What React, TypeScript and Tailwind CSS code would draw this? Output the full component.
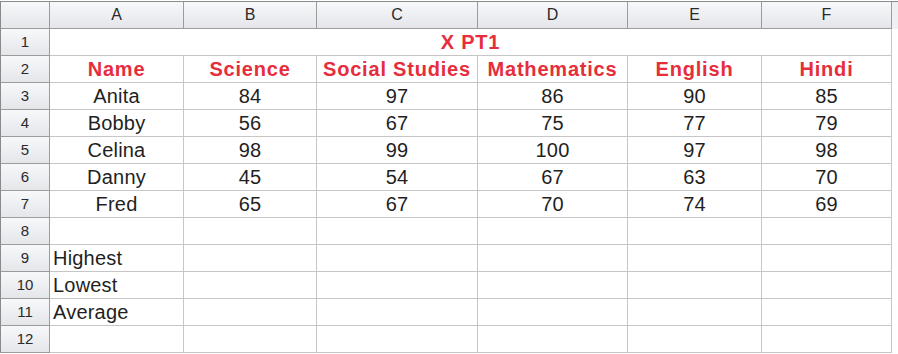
const COLS = ['A', 'B', 'C', 'D', 'E', 'F'];

const SUBJECTS = ['Name', 'Science', 'Social Studies', 'Mathematics', 'English', 'Hindi'];

const MARKS: [string, number[]][] = [
  ['Anita', [84, 97, 86, 90, 85]],
  ['Bobby', [56, 67, 75, 77, 79]],
  ['Celina', [98, 99, 100, 97, 98]],
  ['Danny', [45, 54, 67, 63, 70]],
  ['Fred', [65, 67, 70, 74, 69]],
];

const SUMMARY = ['', 'Highest', 'Lowest', 'Average', ''];

const head =
  'flex items-center justify-center bg-gradient-to-b from-[#f7f8fa] to-[#e4e6ea] border-r border-b border-[#9c9c9c] text-[#2a2a2a]';
const cell = 'flex items-center border-r border-b border-[#c6c6c6] h-[27px]';
const red = 'justify-center text-[20px] font-bold tracking-[0.8px] text-[#e62d3c] whitespace-nowrap';

function RowHead({ n }: { n: number }) {
  return <div className={`${head} h-[27px] text-[15px] border-l border-l-[#8a8a8a]`}>{n}</div>;
}

export default function App() {
  return (
    <div
      className="w-[898px] h-[354px] overflow-hidden bg-white pt-px"
      style={{ fontFamily: '"Liberation Sans", Arial, sans-serif' }}
    >
      <div className="grid grid-cols-[50px_134px_133px_161px_150px_134px_130px_6px]">
        {/* column letters */}
        <div className={`${head} h-[28px] border-t border-t-[#8a8a8a] border-l border-l-[#8a8a8a]`} />
        {COLS.map((c) => (
          <div key={c} className={`${head} h-[28px] text-[16px] border-t border-t-[#8a8a8a]`}>
            {c}
          </div>
        ))}
        <div className="h-[28px] border-t border-[#8a8a8a] bg-[#eef0f2]" />

        {/* row 1: merged title */}
        <RowHead n={1} />
        <div className={`${cell} ${red} col-span-6`}>X PT1</div>
        <div />

        {/* row 2: subjects */}
        <RowHead n={2} />
        {SUBJECTS.map((s) => (
          <div key={s} className={`${cell} ${red}`}>
            {s}
          </div>
        ))}
        <div />

        {/* rows 3-7: marks */}
        {MARKS.map(([name, scores], i) => (
          <div key={name} className="contents">
            <RowHead n={i + 3} />
            <div className={`${cell} justify-center text-[20px] tracking-[0.2px] text-[#1f1f1f]`}>{name}</div>
            {scores.map((m, j) => (
              <div key={j} className={`${cell} justify-center text-[20px] tracking-[0.2px] text-[#1f1f1f]`}>
                {m}
              </div>
            ))}
            <div />
          </div>
        ))}

        {/* rows 8-12 */}
        {SUMMARY.map((label, i) => (
          <div key={i} className="contents">
            <RowHead n={i + 8} />
            <div className={`${cell} pl-[3px] text-[20px] tracking-[0.2px] text-[#1f1f1f]`}>{label}</div>
            {[0, 1, 2, 3, 4].map((j) => (
              <div key={j} className={cell} />
            ))}
            <div />
          </div>
        ))}
      </div>
    </div>
  );
}
